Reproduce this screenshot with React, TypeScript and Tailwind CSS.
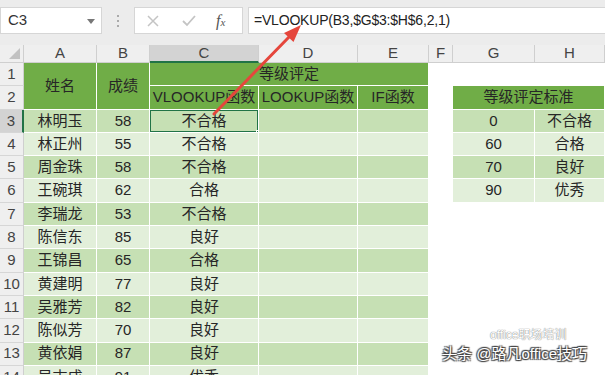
import type { ReactNode } from 'react'

const FONT = { fontFamily: '"Liberation Sans", "Noto Sans CJK SC", sans-serif' }

const rows: [string, string, string][] = [
  ['林明玉', '58', '不合格'],
  ['林正州', '55', '不合格'],
  ['周金珠', '58', '不合格'],
  ['王碗琪', '62', '合格'],
  ['李瑞龙', '53', '不合格'],
  ['陈信东', '85', '良好'],
  ['王锦昌', '65', '合格'],
  ['黄建明', '77', '良好'],
  ['吴雅芳', '82', '良好'],
  ['陈似芳', '70', '良好'],
  ['黄依娟', '87', '良好'],
  ['吴志成', '91', '优秀'],
]

const standard: [string, string][] = [
  ['0', '不合格'],
  ['60', '合格'],
  ['70', '良好'],
  ['90', '优秀'],
]

function Cell({ className = '', children }: { className?: string; children?: ReactNode }) {
  return (
    <div className={`flex items-center justify-center overflow-hidden whitespace-nowrap text-[15px] text-[#262626] ${className}`}>
      {children}
    </div>
  )
}

function RowHead({ n, active }: { n: number; active?: boolean }) {
  return (
    <div
      className={`flex items-center justify-center border-b border-[#d6d6d6] text-[15px] text-[#444] ${
        active ? 'border-r-2 border-r-[#217346] bg-[#d3d3d3]' : 'border-r border-r-[#cfcfcf] bg-[#efefef]'
      }`}
    >
      {n}
    </div>
  )
}

export default function App() {
  const band = (i: number) => (i % 2 === 0 ? 'bg-[#c6e0b4]' : 'bg-[#e2efda]')
  const dataCell = 'border-r border-b border-white'

  return (
    <div className="relative h-[375px] w-[605px] overflow-hidden bg-white" style={FONT}>
      {/* formula bar */}
      <div className="flex h-[45px] items-start bg-[#ececec] pt-[7px]">
        <div className="relative flex h-[27px] w-[102px] items-center border border-[#d6d6d6] bg-white pl-[7px] text-[15px] text-[#333]">
          C3
          <span className="absolute right-[6px] top-[11px] h-0 w-0 border-l-[4px] border-r-[4px] border-t-[5px] border-l-transparent border-r-transparent border-t-[#777]" />
        </div>
        <div className="ml-[14px] flex h-[27px] w-[3px] flex-col items-center justify-center gap-[3px]">
          <span className="h-[2px] w-[2px] bg-[#aaa]" />
          <span className="h-[2px] w-[2px] bg-[#aaa]" />
          <span className="h-[2px] w-[2px] bg-[#aaa]" />
        </div>
        <div className="ml-[15px] flex h-[27px] w-[109px] items-center border border-[#d6d6d6] bg-white">
          <svg width="12" height="12" viewBox="0 0 12 12" className="ml-[12px]">
            <path d="M1 1 L11 11 M11 1 L1 11" stroke="#c4c4c4" strokeWidth="1.5" />
          </svg>
          <svg width="14" height="12" viewBox="0 0 14 12" className="ml-[23px]">
            <path d="M1 6 L5 10 L13 1" stroke="#c4c4c4" strokeWidth="1.8" fill="none" />
          </svg>
          <span
            className="ml-[20px] text-[16px] italic text-[#555]"
            style={{ fontFamily: '"Liberation Serif", serif' }}
          >
            f<span className="text-[11px]">x</span>
          </span>
        </div>
        <div className="ml-[5px] flex h-[27px] flex-1 items-center border border-r-0 border-[#d6d6d6] bg-white pl-[5px] text-[14px] tracking-[-0.2px] text-[#222]">
          =VLOOKUP(B3,$G$3:$H$6,2,1)
        </div>
      </div>

      {/* sheet */}
      <div className="grid grid-cols-[24px_73px_53px_109px_99px_71px_24px_82px_70px] grid-rows-[18px_repeat(14,23.3px)]">
        {/* column headers */}
        <div className="relative border-b border-r border-[#cfcfcf] bg-[#efefef]">
          <span className="absolute bottom-[3px] right-[3px] h-0 w-0 border-b-[11px] border-l-[11px] border-b-[#c2c2c2] border-l-transparent" />
        </div>
        {['A', 'B', 'C', 'D', 'E', 'F', 'G', 'H'].map((c) => (
          <div
            key={c}
            className={`flex items-center justify-center text-[15px] text-[#444] ${
              c === 'C'
                ? 'border-b-2 border-r border-b-[#217346] border-r-[#cfcfcf] bg-[#d3d3d3]'
                : 'border-b border-r border-[#cfcfcf] bg-[#efefef]'
            }`}
          >
            {c}
          </div>
        ))}

        {/* row 1 */}
        <RowHead n={1} />
        <Cell className={`row-span-2 bg-[#70ad47] ${dataCell}`}>姓名</Cell>
        <Cell className={`row-span-2 bg-[#70ad47] ${dataCell}`}>成绩</Cell>
        <Cell className={`col-span-3 bg-[#70ad47] ${dataCell}`}>等级评定</Cell>
        <div />
        <div />
        <div />

        {/* row 2 */}
        <RowHead n={2} />
        <Cell className={`bg-[#70ad47] text-[14px] ${dataCell}`}>VLOOKUP函数</Cell>
        <Cell className={`bg-[#70ad47] text-[14px] ${dataCell}`}>LOOKUP函数</Cell>
        <Cell className={`bg-[#70ad47] ${dataCell}`}>IF函数</Cell>
        <div />
        <Cell className={`col-span-2 bg-[#70ad47] ${dataCell}`}>等级评定标准</Cell>

        {rows.map(([name, score, grade], i) => {
          const std = standard[i]
          return [
            <RowHead key={`h${i}`} n={i + 3} active={i === 0} />,
            <Cell key={`a${i}`} className={`${band(i)} ${dataCell}`}>{name}</Cell>,
            <Cell key={`b${i}`} className={`${band(i)} ${dataCell}`}>{score}</Cell>,
            <Cell key={`c${i}`} className={`relative ${band(i)} ${dataCell}`}>
              {grade}
              {i === 0 && (
                <>
                  <span className="absolute inset-[-1px] border-2 border-[#217346]" />
                  <span className="absolute bottom-[-4px] right-[-4px] h-[6px] w-[6px] border border-white bg-[#217346]" />
                </>
              )}
            </Cell>,
            <Cell key={`d${i}`} className={`${band(i)} ${dataCell}`} />,
            <Cell key={`e${i}`} className={`${band(i)} ${dataCell}`} />,
            <div key={`f${i}`} />,
            std ? (
              <Cell key={`g${i}`} className={`${band(i)} ${dataCell}`}>{std[0]}</Cell>
            ) : (
              <div key={`g${i}`} />
            ),
            std ? (
              <Cell key={`h2${i}`} className={`${band(i)} ${dataCell}`}>{std[1]}</Cell>
            ) : (
              <div key={`h2${i}`} />
            ),
          ]
        })}
      </div>

      {/* red arrow */}
      <svg className="pointer-events-none absolute left-0 top-0" width="605" height="375">
        <line x1="214" y1="114" x2="290" y2="36" stroke="#e5463c" strokeWidth="3" strokeLinecap="round" />
        <polygon points="301,25 293.5,42 284,33" fill="#e5463c" />
      </svg>

      {/* watermark */}
      <div
        className="absolute left-[490px] top-[328px] whitespace-nowrap text-[12px] leading-[14px] text-white"
        style={{ textShadow: '0 0 1px #888, 0 0 1px #888' }}
      >
        office职场培训
      </div>
      <div
        className="absolute left-[442px] top-[345px] whitespace-nowrap text-[15px] leading-[18px] text-white"
        style={{ textShadow: '1px 1px 1px #444, -1px -1px 1px #444, 1px -1px 1px #444, -1px 1px 1px #444' }}
      >
        头条 @路凡office技巧
      </div>
    </div>
  )
}
